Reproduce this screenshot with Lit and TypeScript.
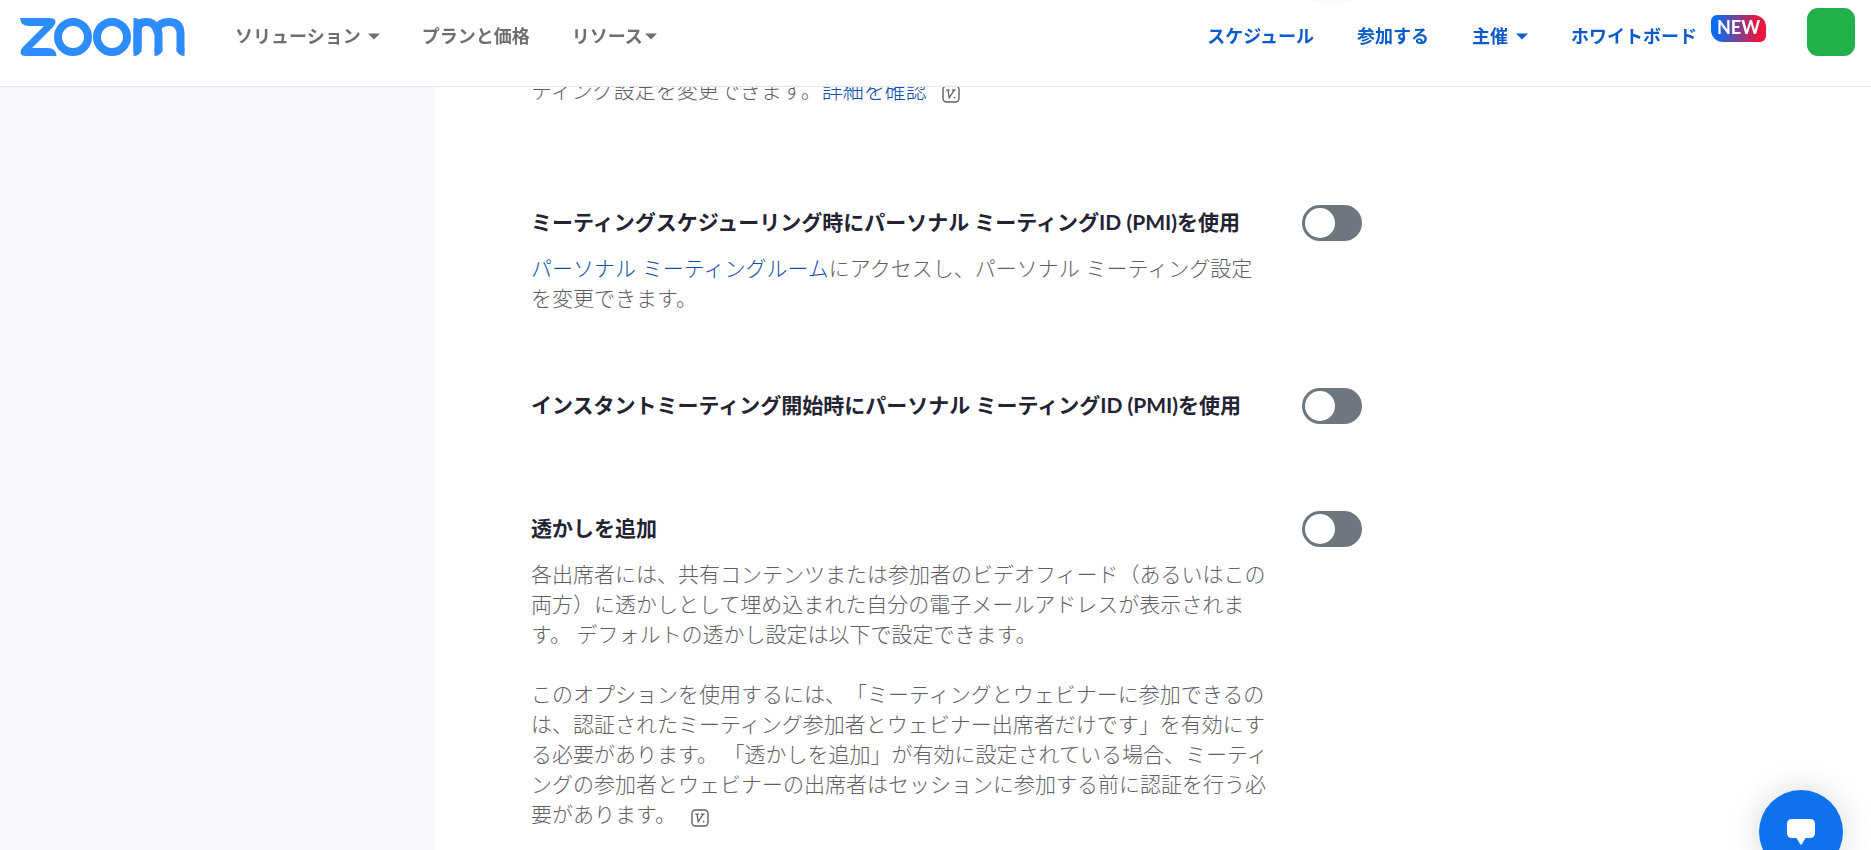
import { LitElement, html, css, nothing } from "lit";
import { customElement, property } from "lit/decorators.js";

const badgeV = html`<svg class="vbadge" viewBox="0 0 18 18" aria-hidden="true">
  <rect x="1" y="1" width="16" height="16" rx="3.5" fill="none" stroke="currentColor" stroke-width="1.4" />
  <path d="M4.3 5.2h3.4M10 5.2h3.6M6 5.2l1.2 7.6 5-7.6" fill="none" stroke="currentColor" stroke-width="1.3" />
  <circle cx="12.6" cy="12.6" r=".9" fill="currentColor" />
</svg>`;

const caret = html`<svg class="caret" viewBox="0 0 12 7" aria-hidden="true"><path d="M0 .5h12L6 6.5z" fill="currentColor" /></svg>`;

@customElement("toggle-switch")
class ToggleSwitch extends LitElement {
  @property() label = "";
  static styles = css`
    :host { display: block; flex: none; width: 60px; height: 36px; }
    input {
      appearance: none; display: block; box-sizing: border-box;
      width: 60px; height: 36px; margin: 0; padding: 3px;
      border-radius: 18px; background: #6e7680; cursor: pointer;
    }
    input::before {
      content: ""; display: block; width: 30px; height: 30px;
      border-radius: 50%; background: #fff;
    }
    input:checked { background: #0e72ed; }
    input:checked::before { margin-left: auto; }
  `;
  render() {
    return html`<input type="checkbox" role="switch" aria-label=${this.label || nothing} />`;
  }
}

@customElement("app-root")
class AppRoot extends LitElement {
  static styles = css`
    :host {
      display: block; height: 100vh; overflow: hidden; background: #fff;
      font-family: Lato, "Noto Sans CJK JP", sans-serif;
      font-size: 21px; line-height: 30px; color: #747487;
      text-spacing-trim: space-all;
    }
    a { text-decoration: none; color: #0e4fa8; }
    header {
      position: fixed; z-index: 2; top: 0; left: 0; right: 0; height: 86px;
      box-sizing: content-box; border-bottom: 1px solid #e6e6ea;
      background: rgba(255, 255, 255, 0.96);
      display: flex; align-items: flex-start; justify-content: space-between;
      padding: 0 16px 0 19px; font-size: 18px; font-weight: 700; line-height: 28px;
    }
    .group { display: flex; align-items: flex-start; }
    .group > * { margin-top: 22px; }
    .group .logo { margin: 18px 49px 0 0; }
    .logo svg { display: block; width: 167px; height: 39px; }
    .nav { display: flex; align-items: center; gap: 7px; color: #6f6f73; }
    button { border: 0; padding: 0; background: none; font: inherit; cursor: pointer; }
    .left .nav { margin-right: 42px; }
    .left .tight { gap: 2px; }
    .right .nav { color: #0b5cca; margin-right: 43px; }
    .right .wide { gap: 8px; }
    .right .board { margin-right: 14px; }
    .caret { width: 12px; height: 7px; }
    .group .new {
      margin: 15px 41px 0 0; width: 55px; height: 27px; line-height: 24px; text-align: center;
      color: #fff; border-radius: 6px 12px 6px 12px;
      background: linear-gradient(90deg, #0b6cf0 10%, #e8173d 85%);
    }
    .group .avatar { margin-top: 8px; width: 48px; height: 48px; border-radius: 11px; background: #22b04b; }
    .layout { display: flex; min-height: 100vh; }
    aside { flex: none; width: 434px; background: #f6f6fb; }
    main { flex: 1; min-width: 0; margin-top: -33px; padding: 0 30px 0 97px; }
    .item { display: flex; gap: 30px; margin-bottom: 75px; }
    .item.bare { margin-bottom: 87px; }
    .item.partial { margin-bottom: 100px; }
    .text { flex: 0 1 741px; }
    h2 { margin: 0; font-size: 21px; line-height: 34px; font-weight: 700; color: #232333; }
    p { margin: 14px 0 0; font-weight: 300; color: #5f6066; }
    p + p { margin-top: 30px; }
    .partial p { margin-top: 108px; }
    .vbadge { width: 18px; height: 18px; margin-left: 15px; vertical-align: -5px; }
    .chat {
      position: fixed; z-index: 3; right: 28px; bottom: -24px; width: 84px; height: 84px;
      border-radius: 50%; background: #0e72ed; box-shadow: 0 0 32px rgba(0, 0, 0, 0.16);
      display: flex; align-items: center; justify-content: center;
    }
    .chat svg { width: 28px; height: 26px; }
  `;
  render() {
    return html`
      <header>
        <div class="group left">
          <a class="logo" href="#" aria-label="zoom">
            <svg viewBox="0 0 167 39" fill="none" stroke="#2d8cff" stroke-width="8">
              <path d="M1 0H30Q36 0 36.500 3Q37 6 34 9L13 30H29Q37 30 37.500 38H7Q2 38 1.500 35Q1 32 4 29L25 8H10Q1.500 8 1 0Z" fill="#2d8cff" stroke="none" />
              <circle cx="54" cy="19" r="15" /><circle cx="93" cy="19" r="15" />
              <path d="M118.500 34V13Q118.500 4 127 4Q135 4 137.500 11Q141 4 150 4Q161.500 4 161.500 16V34M139.500 34V17Q139.500 12 136.500 8" />
              <path d="M114.500 0Q120 0 122.500 4V30Q122 38 114.500 38ZM143.500 30Q143 38 135.500 38V30ZM157.500 30H165.500V38Q158 38 157.500 30Z" fill="#2d8cff" stroke="none" />
            </svg>
          </a>
          <button class="nav">ソリューション${caret}</button>
          <a class="nav" href="#">プランと価格</a>
          <button class="nav tight">リソース${caret}</button>
        </div>
        <div class="group right">
          <a class="nav" href="#">スケジュール</a>
          <a class="nav" href="#">参加する</a>
          <button class="nav wide">主催${caret}</button>
          <a class="nav board" href="#">ホワイトボード</a>
          <span class="new">NEW</span>
          <button class="avatar" aria-label="プロフィール"></button>
        </div>
      </header>
      <div class="layout">
        <aside></aside>
        <main>
          <section class="item partial">
            <div class="text"><p>ティング設定を変更できます。<a href="#">詳細を確認</a>${badgeV}</p></div>
            <toggle-switch label="ミーティング設定"></toggle-switch>
          </section>
          <section class="item">
            <div class="text">
              <h2>ミーティングスケジューリング時にパーソナル ミーティングID (PMI)を使用</h2>
              <p><a href="#">パーソナル ミーティングルーム</a>にアクセスし、パーソナル ミーティング設定を変更できます。</p>
            </div>
            <toggle-switch label="ミーティングスケジューリング時にパーソナル ミーティングID (PMI)を使用"></toggle-switch>
          </section>
          <section class="item bare">
            <div class="text"><h2>インスタントミーティング開始時にパーソナル ミーティングID (PMI)を使用</h2></div>
            <toggle-switch label="インスタントミーティング開始時にパーソナル ミーティングID (PMI)を使用"></toggle-switch>
          </section>
          <section class="item">
            <div class="text">
              <h2>透かしを追加</h2>
              <p>各出席者には、共有コンテンツまたは参加者のビデオフィード（あるいはこの両方）に透かしとして埋め込まれた自分の電子メールアドレスが表示されます。 デフォルトの透かし設定は以下で設定できます。</p>
              <p>このオプションを使用するには、「ミーティングとウェビナーに参加できるのは、認証されたミーティング参加者とウェビナー出席者だけです」を有効にする必要があります。 「透かしを追加」が有効に設定されている場合、ミーティングの参加者とウェビナーの出席者はセッションに参加する前に認証を行う必要があります。${badgeV}</p>
            </div>
            <toggle-switch label="透かしを追加"></toggle-switch>
          </section>
        </main>
      </div>
      <button class="chat" aria-label="チャット">
        <svg viewBox="0 0 28 26" aria-hidden="true"><path d="M5 0H23q5 0 5 5V14q0 5-5 5H18.500L15 25q-1 1.500-2 0L9.500 19H5q-5 0-5-5V5q0-5 5-5z" fill="#fff" /></svg>
      </button>
    `;
  }
}
